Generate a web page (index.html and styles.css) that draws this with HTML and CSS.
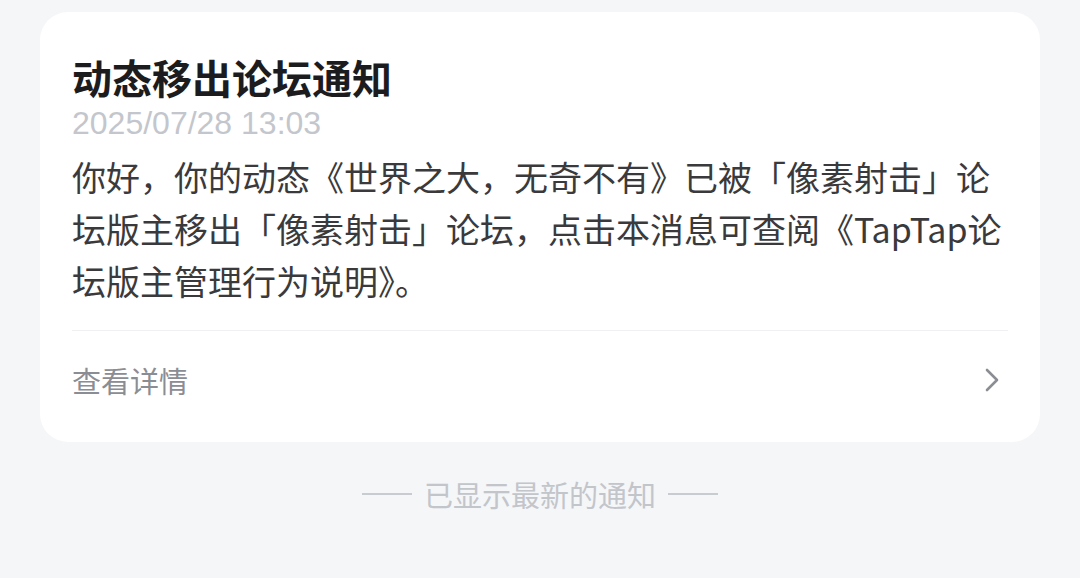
FILE: index.html
```html
<!DOCTYPE html>
<html lang="zh-CN">
<head>
  <meta charset="UTF-8" />
  <meta name="viewport" content="width=device-width, initial-scale=1.0"/>
  <title>通知</title>
  <link rel="stylesheet" href="styles.css">
</head>
<body>
  <div class="page">
    <div class="card">
      <div class="card-body">
        <h2 class="title">动态移出论坛通知</h2>
        <div class="time">2025/07/28 13:03</div>
        <p class="content">你好，你的动态《世界之大，无奇不有》已被「像素射击」论坛版主移出「像素射击」论坛，点击本消息可查阅《TapTap论坛版主管理行为说明》。</p>
      </div>
      <a class="more" href="#">
        <span>查看详情</span>
        <svg class="chevron" viewBox="0 0 16 26" width="16" height="26">
          <path d="M3 3l10 10-10 10" fill="none" stroke="#8a8d93" stroke-width="2.6" stroke-linecap="round" stroke-linejoin="round"/>
        </svg>
      </a>
    </div>

    <div class="end-tip">
      <span class="line"></span>
      <span>已显示最新的通知</span>
      <span class="line"></span>
    </div>
  </div>
</body>
</html>
```

FILE: styles.css
```css
* {
  box-sizing: border-box;
}

body {
  margin: 0;
  background: #f5f6f8;
  font-family: "PingFang SC", "Noto Sans CJK SC", "Noto Sans", sans-serif;
  height: 100vh;
}

.page {
  padding: 12px 40px 0;
}

.card {
  background: #fff;
  border-radius: 28px;
  padding: 0 32px 13px;
}

.card-body {
  padding-top: 43px;
  padding-bottom: 23px;
  border-bottom: 1px solid #f0f0f2;
}

.title {
  margin: 0;
  font-size: 40px;
  font-weight: 700;
  line-height: 44px;
  color: #1c1c1e;
}

.time {
  margin-top: 6px;
  font-family: "Liberation Sans", Arial, sans-serif;
  font-size: 32px;
  line-height: 36px;
  color: #c3c6cc;
}

.content {
  margin: 10px 0 0;
  font-size: 34px;
  line-height: 52px;
  color: #3a3a3c;
  word-break: break-all;
}

.more {
  display: flex;
  align-items: center;
  justify-content: space-between;
  height: 98px;
  font-size: 29px;
  color: #8a8d93;
  text-decoration: none;
}

.chevron {
  margin-right: 8px;
}

.end-tip {
  display: flex;
  align-items: center;
  justify-content: center;
  gap: 12px;
  margin-top: 31px;
  font-size: 29px;
  color: #c2c5ca;
}

.end-tip .line {
  width: 50px;
  height: 2px;
  background: #c8cbd0;
}
```
